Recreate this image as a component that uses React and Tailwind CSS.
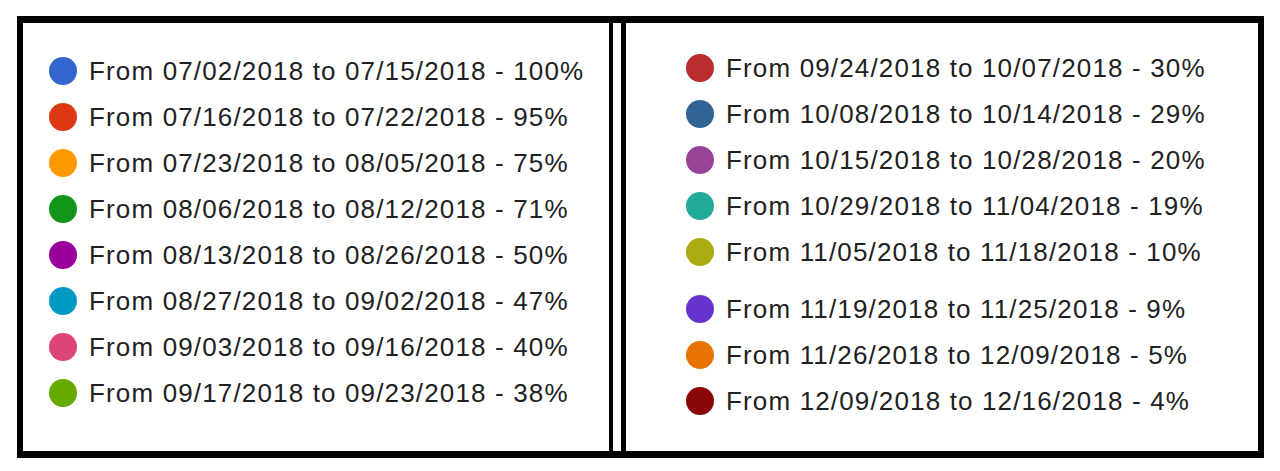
const leftItems = [
    { color: "bg-[#3366cc]", label: "From 07/02/2018 to 07/15/2018 - 100%" },
    { color: "bg-[#dc3912]", label: "From 07/16/2018 to 07/22/2018 - 95%" },
    { color: "bg-[#ff9900]", label: "From 07/23/2018 to 08/05/2018 - 75%" },
    { color: "bg-[#109618]", label: "From 08/06/2018 to 08/12/2018 - 71%" },
    { color: "bg-[#990099]", label: "From 08/13/2018 to 08/26/2018 - 50%" },
    { color: "bg-[#0099c6]", label: "From 08/27/2018 to 09/02/2018 - 47%" },
    { color: "bg-[#dd4477]", label: "From 09/03/2018 to 09/16/2018 - 40%" },
    { color: "bg-[#66aa00]", label: "From 09/17/2018 to 09/23/2018 - 38%" },
];

const rightTop = [
    { color: "bg-[#b82e2e]", label: "From 09/24/2018 to 10/07/2018 - 30%" },
    { color: "bg-[#316395]", label: "From 10/08/2018 to 10/14/2018 - 29%" },
    { color: "bg-[#994499]", label: "From 10/15/2018 to 10/28/2018 - 20%" },
    { color: "bg-[#22aa99]", label: "From 10/29/2018 to 11/04/2018 - 19%" },
    { color: "bg-[#aaaa11]", label: "From 11/05/2018 to 11/18/2018 - 10%" },
];

const rightBottom = [
    { color: "bg-[#6633cc]", label: "From 11/19/2018 to 11/25/2018 - 9%" },
    { color: "bg-[#e67300]", label: "From 11/26/2018 to 12/09/2018 - 5%" },
    { color: "bg-[#8b0707]", label: "From 12/09/2018 to 12/16/2018 - 4%" },
];

const LegendRow = ({ color, label }) => (
    <div className="flex h-[46px] items-center gap-[12px]">
        <span className={`h-[28px] w-[28px] shrink-0 rounded-full ${color}`} />
        <span className="whitespace-nowrap text-[26px] leading-none tracking-[1.15px] text-[#212121]">{label}</span>
    </div>
);

export default function App() {
    return (
        <div className="min-h-[471px] bg-white pl-[17px] pt-[16px] font-['Liberation_Sans',Arial,sans-serif]">
            <div className="flex h-[442px] w-[1247px] border-x-[6px] border-y-[7px] border-black bg-white">
                {/* left column */}
                <div className="flex w-[590px] flex-col border-r-[4px] border-black pl-[26px] pt-[25px]">
                    {leftItems.map((item) => (
                        <LegendRow key={item.label} {...item} />
                    ))}
                </div>

                <div className="w-[8px]" />

                {/* right column */}
                <div className="flex flex-1 flex-col border-l-[5px] border-black pl-[60px] pt-[22px]">
                    {rightTop.map((item) => (
                        <LegendRow key={item.label} {...item} />
                    ))}
                    <div className="mt-[11px] flex flex-col">
                        {rightBottom.map((item) => (
                            <LegendRow key={item.label} {...item} />
                        ))}
                    </div>
                </div>
            </div>
        </div>
    );
}
